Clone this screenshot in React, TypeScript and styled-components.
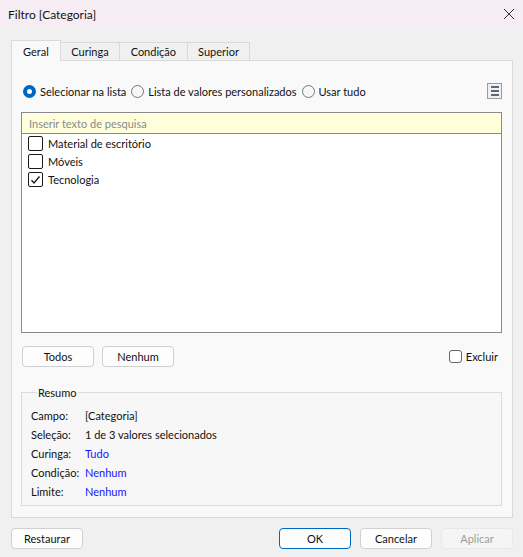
import React, { useState } from "react";
import styled, { createGlobalStyle } from "styled-components";

const GlobalStyle = createGlobalStyle`
  html, body {
    margin: 0;
    padding: 0;
    background: #f0f0f0;
  }
  body {
    font-family: Lato, "Noto Sans", "Liberation Sans", sans-serif;
    font-size: 11px;
    color: #111;
  }
`;

const Window = styled.div`
  width: 523px;
  height: 557px;
  display: flex;
  flex-direction: column;
  background: #f0f0f0;
  overflow: hidden;
`;

const TitleBar = styled.div`
  height: 28px;
  flex: none;
  display: flex;
  align-items: center;
  justify-content: space-between;
  padding: 0 6px 0 8px;
  background: #f5edf3;
  font-size: 12px;
`;

const CloseButton = styled.button`
  border: none;
  background: transparent;
  padding: 0;
  width: 16px;
  height: 16px;
  display: flex;
  align-items: center;
  justify-content: center;
`;

const Body = styled.div`
  flex: 1;
  display: flex;
  flex-direction: column;
  padding: 12px 10px 0 11px;
`;

const TabStrip = styled.div`
  display: flex;
  align-items: flex-end;
  height: 20px;
`;

const Tab = styled.div<{ $active?: boolean }>`
  height: ${(p) => (p.$active ? "21px" : "18px")};
  padding: 0 ${(p) => (p.$active ? "11px" : "10.5px")};
  display: flex;
  align-items: center;
  box-sizing: border-box;
  border: 1px solid #d9d9d9;
  border-bottom: none;
  border-left: ${(p) => (p.$active ? "1px solid #d9d9d9" : "none")};
  background: ${(p) => (p.$active ? "#f9f9f9" : "#f0f0f0")};
  margin-bottom: ${(p) => (p.$active ? "-1px" : "0")};
  position: relative;
  z-index: ${(p) => (p.$active ? 1 : 0)};
`;

const Panel = styled.div`
  height: 458px;
  box-sizing: border-box;
  border: 1px solid #d9d9d9;
  background: #f9f9f9;
  display: flex;
  flex-direction: column;
  padding: 19px 10px 0 9px;
`;

const RadioRow = styled.div`
  height: 22px;
  display: flex;
  align-items: center;
  padding-left: 2px;
`;

const RadioLabel = styled.label`
  display: flex;
  align-items: center;
  gap: 4px;
  margin-right: 5px;
`;

const RadioDot = styled.span<{ $checked?: boolean }>`
  width: 13px;
  height: 13px;
  box-sizing: border-box;
  border-radius: 50%;
  background: ${(p) => (p.$checked ? "#ffffff" : "#f7f7f7")};
  border: ${(p) => (p.$checked ? "4px solid #0067c0" : "1px solid #777")};
`;

const MenuButton = styled.button`
  margin-left: auto;
  width: 15px;
  height: 16px;
  padding: 0;
  box-sizing: border-box;
  border: 1px solid #9a9a9a;
  background: #f0f0f0;
  display: flex;
  flex-direction: column;
  align-items: center;
  justify-content: center;
  gap: 2px;
  span {
    width: 8px;
    height: 2px;
    background: #5a6878;
  }
`;

const ListBox = styled.div`
  margin-top: 10px;
  height: 221px;
  box-sizing: border-box;
  border: 1px solid #8a8a8a;
  background: #ffffff;
  display: flex;
  flex-direction: column;
`;

const SearchInput = styled.input`
  height: 21px;
  box-sizing: border-box;
  border: none;
  border-bottom: 1px solid #8a8a8a;
  background: #ffffdc;
  padding: 0 7px;
  font-family: inherit;
  font-size: 11px;
  outline: none;
  &::placeholder {
    color: #8a8a8a;
  }
`;

const Items = styled.div`
  padding-top: 0;
`;

const Item = styled.label`
  height: 18.3px;
  display: flex;
  align-items: center;
  gap: 5px;
  padding-left: 6px;
`;

const Box = styled.span<{ $checked?: boolean; $soft?: boolean }>`
  width: ${(p) => (p.$soft ? "13px" : "15px")};
  height: ${(p) => (p.$soft ? "13px" : "15px")};
  box-sizing: border-box;
  border: 1px solid ${(p) => (p.$soft ? "#666" : "#1a1a1a")};
  border-radius: ${(p) => (p.$soft ? "3px" : "2px")};
  background: #fff;
  display: flex;
  align-items: center;
  justify-content: center;
`;

const ButtonRow = styled.div`
  margin-top: 13px;
  display: flex;
  align-items: center;
  gap: 8px;
  padding-left: 1px;
`;

const Button = styled.button<{ $primary?: boolean; $disabled?: boolean }>`
  width: 72px;
  height: 21px;
  box-sizing: border-box;
  border-radius: 4px;
  border: 1px solid
    ${(p) => (p.$primary ? "#0067c0" : p.$disabled ? "#e8e8e8" : "#d0d0d0")};
  background: ${(p) => (p.$disabled ? "#f5f5f5" : "#fdfdfd")};
  color: ${(p) => (p.$disabled ? "#9d9d9d" : "#111")};
  font-family: inherit;
  font-size: 11px;
  padding: 0;
`;

const ExcludeLabel = styled.label`
  margin-left: auto;
  margin-right: 4px;
  display: flex;
  align-items: center;
  gap: 4px;
`;

const Summary = styled.fieldset`
  margin: 19px 0 0 0;
  padding: 7px 0 0 9px;
  height: 120px;
  box-sizing: border-box;
  border: 1px solid #dcdcdc;
  background: #f7f7f7;
  legend {
    padding: 0 1px;
    margin-left: 6px;
  }
`;

const SummaryRow = styled.div`
  height: 19px;
  display: flex;
  align-items: center;
`;

const SummaryLabel = styled.span`
  width: 54px;
  flex: none;
`;

const SummaryValue = styled.span<{ $link?: boolean }>`
  color: ${(p) => (p.$link ? "#1515ff" : "#111")};
`;

const Footer = styled.div`
  display: flex;
  align-items: center;
  padding: 10px 0 0 0;
  gap: 9px;
  & > :first-child {
    margin-right: auto;
  }
`;

const Check = () => (
  <svg width="11" height="10" viewBox="0 0 11 10">
    <path d="M1.5 5.2 L4 8 L9.5 1.5" fill="none" stroke="#1a1a1a" strokeWidth="1.4" />
  </svg>
);

const items = [
  { name: "Material de escritório", checked: false },
  { name: "Móveis", checked: false },
  { name: "Tecnologia", checked: true },
];

const summary = [
  { label: "Campo:", value: "[Categoria]", link: false },
  { label: "Seleção:", value: "1 de 3 valores selecionados", link: false },
  { label: "Curinga:", value: "Tudo", link: true },
  { label: "Condição:", value: "Nenhum", link: true },
  { label: "Limite:", value: "Nenhum", link: true },
];

export default function App() {
  const [search, setSearch] = useState("");
  return (
    <Window>
      <GlobalStyle />
      <TitleBar>
        <span>Filtro [Categoria]</span>
        <CloseButton>
          <svg width="12" height="12" viewBox="0 0 12 12">
            <path d="M1 1 L11 11 M11 1 L1 11" stroke="#333" strokeWidth="1" />
          </svg>
        </CloseButton>
      </TitleBar>
      <Body>
        <TabStrip>
          <Tab $active>Geral</Tab>
          <Tab>Curinga</Tab>
          <Tab>Condição</Tab>
          <Tab>Superior</Tab>
        </TabStrip>
        <Panel>
          <RadioRow>
            <RadioLabel>
              <RadioDot $checked />
              Selecionar na lista
            </RadioLabel>
            <RadioLabel>
              <RadioDot />
              Lista de valores personalizados
            </RadioLabel>
            <RadioLabel>
              <RadioDot />
              Usar tudo
            </RadioLabel>
            <MenuButton>
              <span />
              <span />
              <span />
            </MenuButton>
          </RadioRow>
          <ListBox>
            <SearchInput
              placeholder="Inserir texto de pesquisa"
              value={search}
              onChange={(e) => setSearch(e.target.value)}
            />
            <Items>
              {items.map((it) => (
                <Item key={it.name}>
                  <Box $checked={it.checked}>{it.checked && <Check />}</Box>
                  {it.name}
                </Item>
              ))}
            </Items>
          </ListBox>
          <ButtonRow>
            <Button>Todos</Button>
            <Button>Nenhum</Button>
            <ExcludeLabel>
              <Box $soft />
              Excluir
            </ExcludeLabel>
          </ButtonRow>
          <Summary>
            <legend>Resumo</legend>
            {summary.map((row) => (
              <SummaryRow key={row.label}>
                <SummaryLabel>{row.label}</SummaryLabel>
                <SummaryValue $link={row.link}>{row.value}</SummaryValue>
              </SummaryRow>
            ))}
          </Summary>
        </Panel>
        <Footer>
          <Button>Restaurar</Button>
          <Button $primary>OK</Button>
          <Button>Cancelar</Button>
          <Button $disabled>Aplicar</Button>
        </Footer>
      </Body>
    </Window>
  );
}
